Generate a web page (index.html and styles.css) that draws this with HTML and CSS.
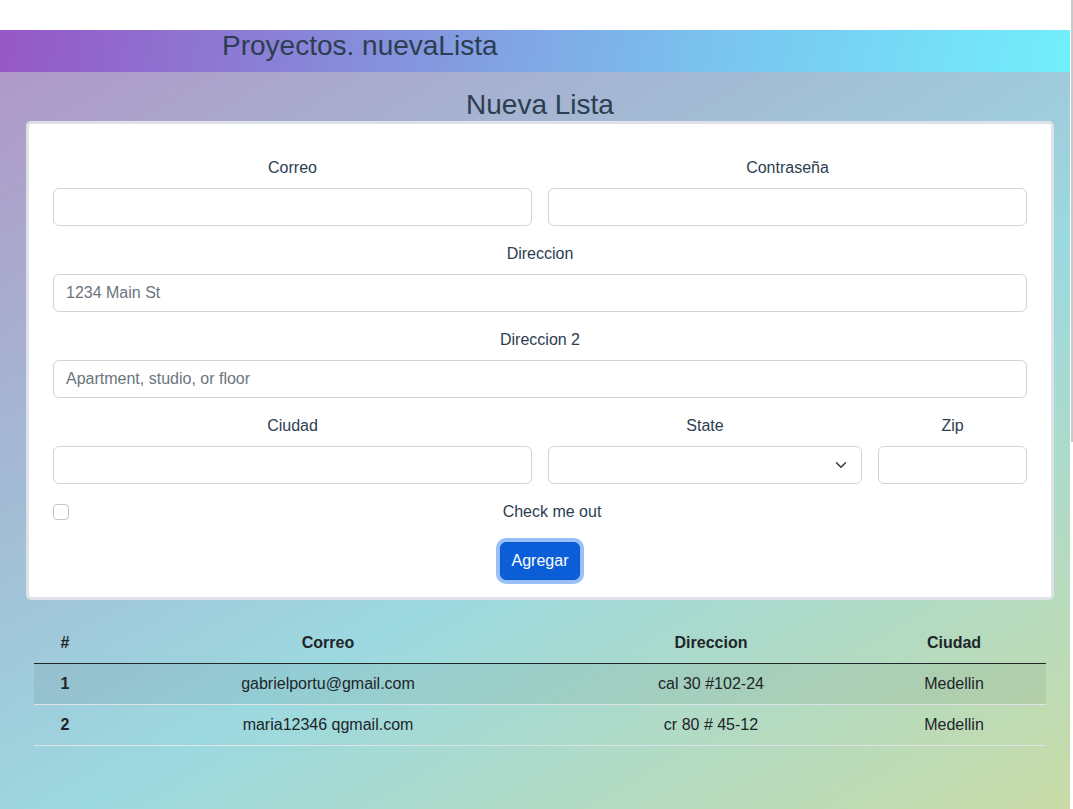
FILE: index.html
```html
<!DOCTYPE html>
<html lang="es">
<head>
<meta charset="utf-8">
<title>Proyectos. nuevaLista</title>
<link rel="stylesheet" href="styles.css">
</head>
<body>
<div class="page">
  <div class="topbar"></div>
  <header class="navbar">
    <h1 class="brand">Proyectos. nuevaLista</h1>
  </header>
  <main class="content">
    <h2 class="title">Nueva Lista</h2>
    <form class="card">
      <div class="grid">
        <div class="field span-6">
          <label class="lbl">Correo</label>
          <input class="ctl" type="email">
        </div>
        <div class="field span-6">
          <label class="lbl">Contraseña</label>
          <input class="ctl" type="password">
        </div>
        <div class="field span-12">
          <label class="lbl">Direccion</label>
          <input class="ctl" type="text" placeholder="1234 Main St">
        </div>
        <div class="field span-12">
          <label class="lbl">Direccion 2</label>
          <input class="ctl" type="text" placeholder="Apartment, studio, or floor">
        </div>
        <div class="field span-6">
          <label class="lbl">Ciudad</label>
          <input class="ctl" type="text">
        </div>
        <div class="field span-4">
          <label class="lbl">State</label>
          <select class="ctl sel"><option></option></select>
        </div>
        <div class="field span-2">
          <label class="lbl">Zip</label>
          <input class="ctl" type="text">
        </div>
        <div class="check span-12">
          <input class="chk" type="checkbox">
          <label class="chk-lbl">Check me out</label>
        </div>
        <div class="actions span-12">
          <button class="btn" type="button">Agregar</button>
        </div>
      </div>
    </form>
    <table class="tbl">
      <colgroup>
        <col class="c1"><col class="c2"><col class="c3"><col class="c4">
      </colgroup>
      <thead>
        <tr><th>#</th><th>Correo</th><th>Direccion</th><th>Ciudad</th></tr>
      </thead>
      <tbody>
        <tr class="odd"><th>1</th><td>gabrielportu@gmail.com</td><td>cal 30 #102-24</td><td>Medellin</td></tr>
        <tr><th>2</th><td>maria12346 qgmail.com</td><td>cr 80 # 45-12</td><td>Medellin</td></tr>
      </tbody>
    </table>
  </main>
</div>
<div class="scroll"><div class="thumb"></div></div>
</body>
</html>
```

FILE: styles.css
```css
* { box-sizing: border-box; }
html, body { margin: 0; padding: 0; }
body {
  display: flex;
  width: 1073px;
  height: 809px;
  overflow: hidden;
  font-family: "Liberation Sans", Arial, sans-serif;
  font-size: 16px;
  line-height: 24px;
  color: #2c3e50;
  background: #fff;
}
.page {
  width: 1070px;
  display: flex;
  flex-direction: column;
}
.topbar { height: 30px; background: #fff; }
.navbar {
  height: 42px;
  background: linear-gradient(100deg, #9657c6 0%, #868fdc 35%, #7ac1ee 65%, #72effc 100%);
}
.brand {
  margin: 0;
  padding-left: 222px;
  font-size: 28px;
  font-weight: 400;
  line-height: 32px;
  color: #2c3e50;
}
.content {
  flex: 1;
  background: linear-gradient(150deg, #b099c8 0%, #a4b7d3 28%, #9cd9e0 58%, #b3dbc2 80%, #c8dba6 100%);
  padding-top: 17px;
}
.title {
  margin: 0;
  text-align: center;
  font-size: 28px;
  font-weight: 400;
  line-height: 32px;
  padding-left: 10px;
  color: #2c3e50;
}
.card {
  margin: 0 0 0 26px;
  width: 1028px;
  background: #fff;
  border: 3px solid #dee1e6;
  border-radius: 5px;
  padding: 32px 24px 17px;
}
.grid {
  display: grid;
  grid-template-columns: repeat(12, 1fr);
  column-gap: 16px;
  row-gap: 16px;
}
.span-12 { grid-column: span 12; }
.span-6 { grid-column: span 6; }
.span-4 { grid-column: span 4; }
.span-2 { grid-column: span 2; }
.field { display: flex; flex-direction: column; }
.lbl {
  display: block;
  text-align: center;
  margin-bottom: 8px;
  line-height: 24px;
}
.ctl {
  display: block;
  width: 100%;
  height: 38px;
  padding: 6px 12px;
  font-family: inherit;
  font-size: 16px;
  line-height: 24px;
  color: #212529;
  background: #fff;
  border: 1px solid #ced4da;
  border-radius: 6px;
  outline: none;
}
.ctl::placeholder { color: #6c757d; opacity: 1; }
.sel {
  appearance: none;
  -webkit-appearance: none;
  padding-right: 36px;
  background-image: url("data:image/svg+xml,%3csvg xmlns='http://www.w3.org/2000/svg' viewBox='0 0 16 16'%3e%3cpath fill='none' stroke='%23343a40' stroke-linecap='round' stroke-linejoin='round' stroke-width='2' d='m2 5 6 6 6-6'/%3e%3c/svg%3e");
  background-repeat: no-repeat;
  background-position: right 12px center;
  background-size: 16px 12px;
}
.check {
  display: block;
  min-height: 24px;
  padding-left: 24px;
}
.chk {
  appearance: none;
  -webkit-appearance: none;
  float: left;
  margin: 4px 0 0 -24px;
  width: 16px;
  height: 16px;
  border: 1px solid #c4c8cc;
  border-radius: 4px;
  background: #fff;
}
.chk-lbl { display: block; text-align: center; }
.actions { text-align: center; padding-top: 2px; }
.btn {
  display: inline-block;
  height: 38px;
  padding: 6px 11px;
  font-family: inherit;
  font-size: 16px;
  line-height: 24px;
  color: #fff;
  background: #0b5ed7;
  border: 1px solid #0a58ca;
  border-radius: 6px;
  box-shadow: 0 0 0 4px #98bff7;
}
.tbl {
  margin: 23px 0 0 34px;
  width: 1012px;
  border-collapse: collapse;
  table-layout: fixed;
  color: #212529;
}
.c1 { width: 62px; }
.c2 { width: 464px; }
.c3 { width: 302px; }
.c4 { width: 184px; }
.tbl th, .tbl td {
  padding: 8px;
  line-height: 24px;
  text-align: center;
  border-bottom: 1px solid #dde3e6;
}
.tbl th { font-weight: 700; }
.tbl thead th { border-bottom: 1px solid #212529; }
.tbl tbody tr.odd { background: rgba(0, 0, 0, 0.055); }
.scroll {
  width: 3px;
  background: #fff;
}
.thumb {
  margin-left: 1px;
  width: 2px;
  height: 442px;
  background: #c9c9c9;
}
```
